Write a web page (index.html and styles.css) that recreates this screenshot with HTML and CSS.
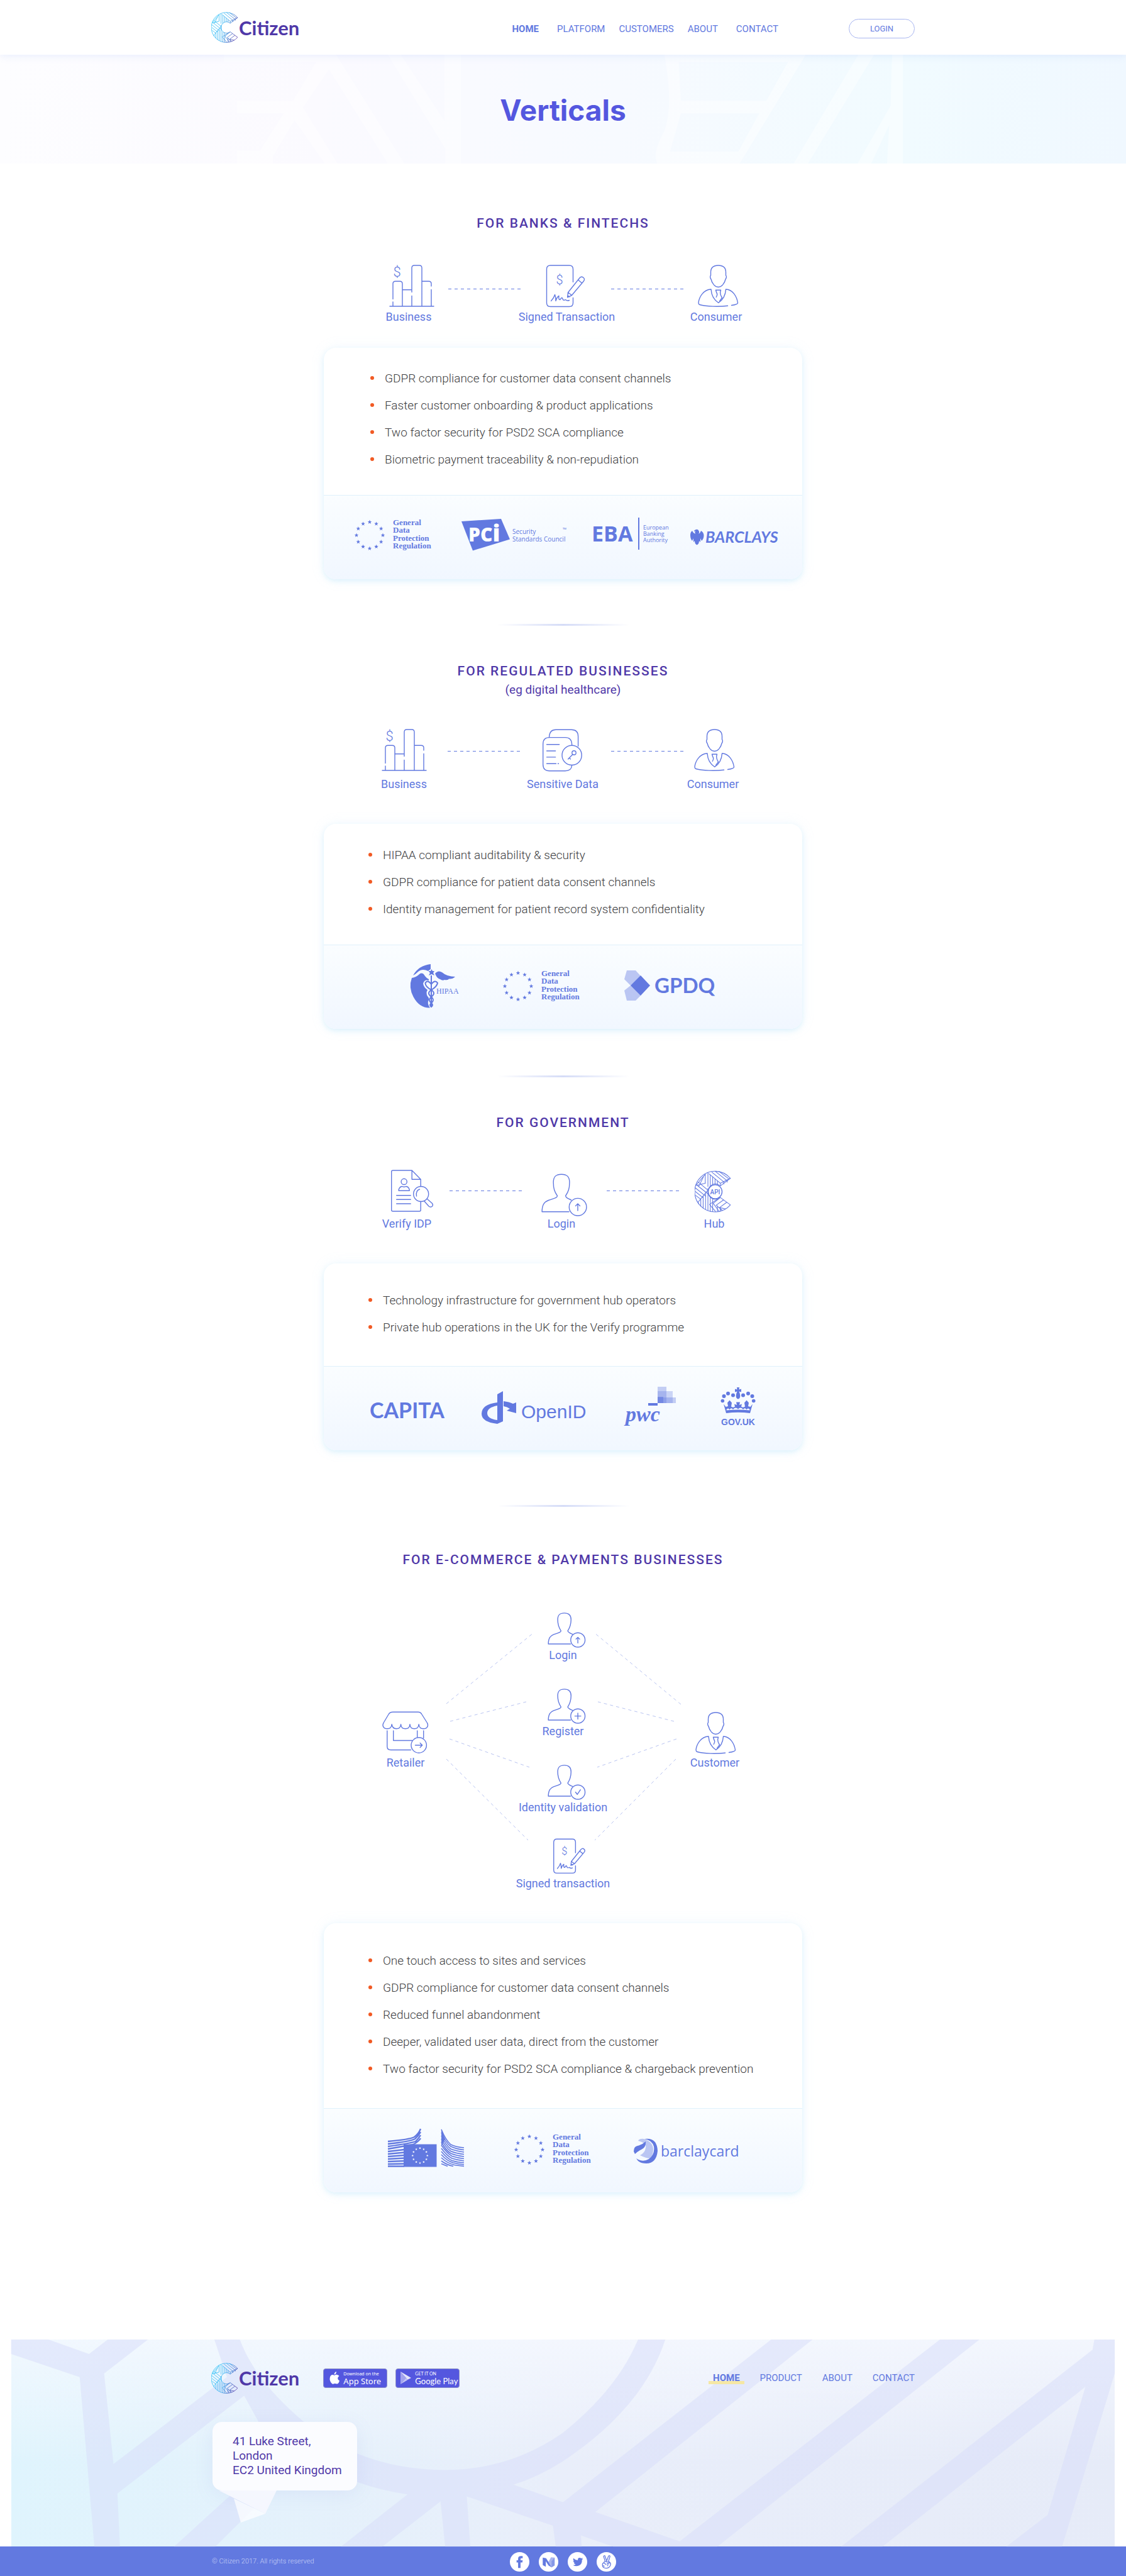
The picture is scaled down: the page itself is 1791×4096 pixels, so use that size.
FILE: index.html
```html
<!DOCTYPE html>
<html lang="en">
<head>
<meta charset="utf-8">
<title>Citizen – Verticals</title>
<meta name="viewport" content="width=device-width, initial-scale=1">
<link rel="stylesheet" href="styles.css">
</head>
<body>
<svg class="sprite" aria-hidden="true">
  <defs>
    <linearGradient id="brand" gradientUnits="userSpaceOnUse" x1="28" y1="100" x2="166" y2="140">
      <stop offset="0" stop-color="#2bc4f8"/><stop offset=".5" stop-color="#35aef0"/><stop offset="1" stop-color="#4f38a8"/>
    </linearGradient>
    <symbol id="c-mark" viewBox="28 48 138 158">
      <g fill="none" stroke-width="2.500" stroke-linejoin="round">
        <path d="M163 77A77 77 0 1 0 163 178L125 150L117 154A27 27 0 0 1 79 127A27 27 0 0 1 117 101L125 106Z"/>
        <path d="M82 60L125 96L163 77M93 54L137 90M106 51L149 85M120 51L157 79M125 96V106M138 90V99M151 84V92"/>
        <path d="M78 57V108M87 64V108M96 71V102M105 79V100M114 87V101M68 62V96M68 62L34 102"/>
        <path d="M61 72L44 106M68 96L34 104M42 92L78 122M35 102L78 136M31 114L70 145M30 127L60 151M32 142L50 156"/>
        <path d="M78 116V198M78 122L42 166M69 132V195M60 143V190M51 154V183M42 166V173M87 149V202M96 153V203"/>
        <path d="M117 154L84 176L107 203M125 150L98 172L120 202M137 159L109 179L133 199M149 168L122 188L145 193M114 181V203M125 188V201"/>
      </g>
    </symbol>
    <symbol id="business" viewBox="0 0 80 72" overflow="visible">
      <path d="M10 69H80M15 62V69M15 57.500V33Q15 29.200 19 29.200H26Q30 29.200 30 33V69M30 42.800H45M45 46.600V8Q45 4 49 4H57Q61 4 61 8V69M45 52.400V69M61 29.200H72Q76 29.200 76 33V37M76 42.400V69"/>
      <text class="glyph" x="21.700" y="21.500" font-size="22">$</text>
    </symbol>
    <symbol id="signed" viewBox="0 0 80 72" overflow="visible">
      <path d="M49.500 30.400V10Q49.500 4 43.500 4H13.500Q7.500 4 7.500 10V63.500Q7.500 69.500 13.500 69.500H43.500Q49.500 69.500 49.500 63.500V55.500"/>
      <path d="M14.600 60.600Q19 56 20.600 50.500Q22 54 22 60.500Q24 54 27 52.500Q26 59 29 58.500Q32 53 33 57.500Q34 60.500 37.500 58.500Q40 61 43.500 59.500"/>
      <path d="M40.600 54.800L41.500 47L59.500 24.500Q62.500 20.500 66 23.500Q69 26 66 29.500L47.500 51.500ZM41.500 47L47.500 51.500M57.500 27L63.500 32M41 52L44 54"/>
      <text class="glyph" x="28.100" y="33.500" font-size="20">$</text>
    </symbol>
    <symbol id="consumer" viewBox="0 0 80 72" overflow="visible">
      <path d="M43.500 4C35.500 4 31.500 8 31.500 15V20C30 21 30.500 24 32 26C33.500 33 38.500 38.500 43.500 38.500C48.500 38.500 53.500 33 55 26C56.500 24 57 21 55.500 20V15C55.500 8 51.500 4 43.500 4Z"/>
      <path d="M58.500 68.300C44 70 25 69.500 14 66.500Q12 66 12 63.500C13 54 20 42.500 32 42C32.500 51 37 59 43.800 63.500C50.500 59 55 51 55.500 42C67 42.500 73 54 74.500 63.500Q74.800 66 64.500 67.500"/>
      <path d="M40.600 47L39.500 43.200H47.500L46.600 47Q46.500 51 49.500 55.500L45.500 61M40.600 47Q43 50 40.200 54.500"/>
    </symbol>
    <symbol id="sensitive" viewBox="0 0 80 72" overflow="visible">
      <path d="M18.600 16.600V15Q19.500 4.200 29 4.200H54Q64.600 4.200 64.600 15V30.500"/>
      <path d="M54.600 28.500V27Q54 16.600 44 16.600H19Q8.700 16.600 8.700 27V59.500Q8.700 69.700 19 69.700H44Q54 69.700 54.600 61"/>
      <circle cx="54.600" cy="44.900" r="15.600"/><circle cx="58" cy="41" r="3.200"/>
      <path d="M56 43.500L48.600 51M50.500 49L52.500 51M14.600 27.800H34.600M14.600 38H28.600M14.600 47.900H28.600M14.600 58.200H29.500M32.500 58.200H33.500"/>
    </symbol>
    <symbol id="verify" viewBox="0 0 80 72" overflow="visible">
      <path d="M62.200 28.500V17.300L48.200 3H18Q15.700 3 15.700 5V66Q15.700 68 18 68H60Q62.200 68 62.200 66V52.400M48.200 3V17.300H62.200"/>
      <circle cx="35.700" cy="20.900" r="4.600"/><path d="M27.200 35.300V33.500Q29 28.500 33 28.500Q35.700 30 38.500 28.500Q42.500 28.500 44.200 33.500V35.300ZM23.700 42.800H46.200M23.700 49.200H46.200M23.700 56H46.200"/>
      <circle cx="62.700" cy="40.500" r="12"/><path d="M55.500 44Q54 35 60.500 33M67.500 51.500L75 60Q78 62.500 80.500 60Q82.500 57.500 80 55L72.500 48.500"/>
    </symbol>
    <symbol id="person" viewBox="0 0 80 72" overflow="visible">
      <path d="M52 68.800H9.100C9.300 57 13 53 19.500 50.500C27 47.500 33 47.500 33.500 43.500C29 37 27.200 32 27.200 22C27.200 13 31 9.300 40 9.300C49 9.300 52.900 13 52.900 22C52.900 32 51 37 46.600 43.500C47 46.500 50 47.500 55.500 50"/>
      <circle cx="66.100" cy="61.200" r="13.800"/>
    </symbol>
    <symbol id="shop" viewBox="0 0 80 72" overflow="visible">
      <path d="M20 3.200H60Q64 3.200 66 7L74.500 20.500C77 25 74.500 29.800 68.600 29.800Q61.800 29.800 61.200 22.700Q60.500 29.800 54 29.800Q47.500 29.800 47 22.700Q46.500 29.800 39.800 29.800Q33 29.800 32.600 22.700Q32 29.800 25.400 29.800Q19 29.800 18.200 22.700Q17.500 29.800 11 29.800C5 29.800 2.500 25 5 20.500L13 7Q15 3.200 20 3.200Z"/>
      <path d="M10.800 33V58Q10.800 63.500 16.500 63.500H48.500M20.700 33V48.500H51M58.700 33V43M68.700 33V44.500"/>
      <circle cx="61.200" cy="56" r="12.200"/><path d="M55.500 56H66.500M63.200 52.500L66.700 56L63.200 59.500"/>
    </symbol>
    <path id="star" d="M0-3.400L.9-1.100L3.300-1.100L1.400.500L2.100 2.900L0 1.500L-2.100 2.900L-1.400.500L-3.300-1.100L-.9-1.100Z"/>
    <g id="stars">
      <use href="#star" x="0" y="-21"/><use href="#star" x="10.500" y="-18.200"/><use href="#star" x="18.200" y="-10.500"/><use href="#star" x="21" y="0"/><use href="#star" x="18.200" y="10.500"/><use href="#star" x="10.500" y="18.200"/><use href="#star" x="0" y="21"/><use href="#star" x="-10.500" y="18.200"/><use href="#star" x="-18.200" y="10.500"/><use href="#star" x="-21" y="0"/><use href="#star" x="-18.200" y="-10.500"/><use href="#star" x="-10.500" y="-18.200"/>
    </g>
  </defs>
</svg>

<header class="site-header">
  <div class="wide bar">
    <a class="logo" href="#"><svg class="logo-mark" viewBox="28 48 138 158" stroke="url(#brand)" aria-hidden="true"><use href="#c-mark" x="28" y="48" width="138" height="158"/></svg><span>Citizen</span></a>
    <nav class="nav main-nav" aria-label="Main">
      <a class="current" href="#">HOME</a><a href="#">PLATFORM</a><a href="#">CUSTOMERS</a><a href="#">ABOUT</a><a class="last" href="#">CONTACT</a>
    </nav>
    <button class="login" type="button">LOGIN</button>
  </div>
</header>

<section class="hero">
  <svg class="hero-art" viewBox="0 0 1791 173" preserveAspectRatio="none" aria-hidden="true">
    <g transform="matrix(1.1424 0 0 .311 0 -12.400)" fill="#fff" fill-opacity=".42">
      <path d="M312 40H468L563 596H540L458 115L422 310L470 596H452L410 375L380 560V596H330V530H362L395 340H330V275H408L440 78H312Z"/>
      <path d="M540 40H558L619 380V40H642V596H620V520Z"/>
      <path fill-rule="evenodd" d="M925 40H1122L1030 596H915Q908 540 925 430Q938 300 925 40ZM945 78L948 275H1067L1097 78ZM948 340L933 535H1028L1057 340Z"/>
      <path d="M1195 40H1217L1125 596H1105ZM1242 40H1257V596H1235L1238 400L1213 596H1194L1240 300Z"/>
    </g>
  </svg>
  <h1>Verticals</h1>
</section>

<main>
  <section class="vertical banks">
    <h2>FOR BANKS &amp; FINTECHS</h2>
    <div class="flow">
      <figure><svg class="icon" viewBox="0 0 80 72"><use href="#business"/></svg><figcaption>Business</figcaption></figure>
      <span class="dash"></span>
      <figure><svg class="icon" viewBox="0 0 80 72"><use href="#signed"/></svg><figcaption>Signed Transaction</figcaption></figure>
      <span class="dash"></span>
      <figure><svg class="icon" viewBox="0 0 80 72"><use href="#consumer"/></svg><figcaption>Consumer</figcaption></figure>
    </div>
    <div class="card">
      <ul>
        <li>GDPR compliance for customer data consent channels</li>
        <li>Faster customer onboarding &amp; product applications</li>
        <li>Two factor security for PSD2 SCA compliance</li>
        <li>Biometric payment traceability &amp; non-repudiation</li>
      </ul>
      <div class="partners">
        <svg width="132" height="74" viewBox="0 2 132 74"><use href="#stars" x="22" y="35"/><g class="gdpr"><text x="59" y="19">General</text><text x="59" y="31">Data</text><text x="59" y="44">Protection</text><text x="59" y="56">Regulation</text></g></svg>
        <svg width="173" height="74" viewBox="0 0 173 74"><path d="M0 11L63 7L77 39.500L18 57.500Z"/><text class="pci" x="11" y="43">PC<tspan font-size="37">i</tspan></text><g class="tiny"><text x="81" y="31">Security</text><text x="81" y="43">Standards Council</text><text x="161" y="27" font-size="8">™</text></g></svg>
        <svg width="119" height="74" viewBox="0 0 119 74"><text class="eba" x="-2" y="43">EBA</text><path d="M72 5H74V56H72Z"/><g class="micro"><text x="80" y="24">European</text><text x="80" y="34">Banking</text><text x="80" y="44">Authority</text></g></svg>
        <svg width="142" height="74" viewBox="0 0 142 74"><path d="M9 24Q12 23 13.500 26Q15 28 13.500 31Q16 29 17 26Q21 28 21.500 33Q21.500 39 18 42L16 38V44L14 42Q14 47 10.500 48.500Q7 47 7 42L5 44V38L3 42Q0 39 0 33Q0 28 3 26Q4 29 8 31Q6.500 28 8.500 26.500L5.500 27Q6.500 24.500 9 24Z"/><text class="barclays" x="24" y="45">BARCLAYS</text></svg>
      </div>
    </div>
  </section>

  <hr>

  <section class="vertical regulated">
    <h2>FOR REGULATED BUSINESSES</h2>
    <p class="sub">(eg digital healthcare)</p>
    <div class="flow">
      <figure><svg class="icon" viewBox="5 0 80 72"><use href="#business" width="80" height="72"/></svg><figcaption>Business</figcaption></figure>
      <span class="dash"></span>
      <figure><svg class="icon" viewBox="0 0 80 72"><use href="#sensitive"/></svg><figcaption>Sensitive Data</figcaption></figure>
      <span class="dash"></span>
      <figure><svg class="icon" viewBox="1 0 80 72"><use href="#consumer" width="80" height="72"/></svg><figcaption>Consumer</figcaption></figure>
    </div>
    <div class="card">
      <ul>
        <li>HIPAA compliant auditability &amp; security</li>
        <li>GDPR compliance for patient data consent channels</li>
        <li>Identity management for patient record system confidentiality</li>
      </ul>
      <div class="partners">
        <svg width="90" height="74" viewBox="0 0 90 74">
          <path d="M32 0V8L28 11Q18 6 11 13Q7 17 4 18Q13 2 32 0Z"/>
          <path d="M2 22Q9 21 14 16Q19 12 23 19Q26 23 29 24V26Q22 24 20 31Q21 37 27 41Q24 46 27 51Q31 55 28 59Q27 64 31 69.500Q14 70 4.500 52Q-3.500 37 2 22Z"/>
          <path d="M33.500 8L35 11H38L36 14L38 18L33.500 16L29 18L31 14L28.500 11H32ZM39 15Q44 9 50 13Q58 20 71 20Q67 24 61 23.500Q60 26 54 25Q51 27 47 24Q42 23 39 15Z"/>
          <g fill="none" stroke="#6279e0" stroke-width="2"><path d="M33 18V69M33 32Q27 24 23.500 30Q23.500 36 33 41Q41 46 33 52Q27 57 33 62Q37 65 33 68M33 32Q39 24 43 30Q42 36 33 41Q25 46 33 52Q39 57 33 62Q29 65 33 68"/></g>
          <text class="hipaa" x="41" y="47">HIPAA</text></svg>
        <svg width="132" height="74" viewBox="0 0 132 74"><use href="#stars" x="22" y="35"/><g class="gdpr"><text x="59" y="19">General</text><text x="59" y="31">Data</text><text x="59" y="44">Protection</text><text x="59" y="56">Regulation</text></g></svg>
        <svg width="147" height="74" viewBox="0 0 147 74"><path opacity=".4" d="M4 10H18L27 20L10 34L0 24ZM10 34L0 42L4 58H18L27 49Z"/><path d="M26 18L41 34L26 50L10 34Z"/><text class="gpdq" x="48" y="46">GPDQ</text></svg>
      </div>
    </div>
  </section>

  <hr>

  <section class="vertical government">
    <h2>FOR GOVERNMENT</h2>
    <div class="flow">
      <figure><svg class="icon" viewBox="0 0 80 72"><use href="#verify"/></svg><figcaption>Verify IDP</figcaption></figure>
      <span class="dash"></span>
      <figure><svg class="icon" viewBox="0 0 80 72"><use href="#person"/><path d="M66 67V56M62.500 59.500L66 56L69.500 59.500"/></svg><figcaption>Login</figcaption></figure>
      <span class="dash"></span>
      <figure><svg class="icon" viewBox="0 0 80 72"><use href="#c-mark" x="9" y="3" width="58" height="67"/><circle class="api" cx="41.500" cy="36.900" r="11"/><text class="glyph bold" x="41.500" y="40.500" font-size="10">API</text></svg><figcaption>Hub</figcaption></figure>
    </div>
    <div class="card">
      <ul>
        <li>Technology infrastructure for government hub operators</li>
        <li>Private hub operations in the UK for the Verify programme</li>
      </ul>
      <div class="partners">
        <svg width="119" height="74" viewBox="0 0 119 74"><text class="capita" x="-1" y="52">CAPITA</text></svg>
        <svg width="170" height="74" viewBox="0 0 170 74"><path d="M25 15V27Q0 30 0 45Q0 58 25 61L34 57V9L25 14ZM25 32V55Q9 53 9 44Q9 35 25 32ZM35 25Q44 26 50 29L55 27V44L40 40L45 37Q41 34 35 33Z"/><text class="openid" x="63" y="52">OpenID</text></svg>
        <svg width="94" height="74" viewBox="0 0 94 74"><path d="M37 28H52V32H37Z"/><path opacity=".35" d="M52 2H66V28H52Z"/><path opacity=".3" d="M52 9H76V28H52Z"/><path opacity=".35" d="M52 19H81V28H52Z"/><path opacity=".6" d="M52 18H61V28H52Z"/><text class="pwc" x="1" y="57">pwc</text></svg>
        <svg width="57" height="74" viewBox="0 0 57 74"><circle cx="5.500" cy="17" r="3"/><circle cx="12" cy="12.700" r="3"/><circle cx="20" cy="15.500" r="3"/><circle cx="36" cy="15.500" r="3"/><circle cx="44" cy="12.700" r="3"/><circle cx="50.500" cy="17" r="3"/><circle cx="3.300" cy="24.500" r="2.800"/><circle cx="52.700" cy="24.500" r="2.800"/><path d="M26 3H30L29.500 6.500L33 5.500V10.500L29.500 9.500Q32 15 31 19Q28 24 25 19Q24 15 26.500 9.500L23 10.500V5.500L26.500 6.500Z"/><path d="M5 29.500L8.500 34L12 33L11 27.500L14.500 23.500L18 27.500L17 33.500Q20.500 36 23 33.500L22 29.500L26 31L25 26.500H31L30 31L34 29.500L33 33.500Q35.500 36 39 33.500L38 27.500L41.500 23.500L45 27.500L44 33L47.500 34L51 29.500L47 44Q28 41.500 9 44Z"/><path fill="#f5faff" d="M9.500 38.500Q12 34.500 14.500 38.500Q17 34.500 20 38Q24 33.500 28 37.500Q32 33.500 36 38Q39 34.500 41.500 38.500Q44 34.500 46.500 38.500V39.500Q28 37.500 9.500 39.500Z"/><text class="govuk" x="28" y="63">GOV.UK</text></svg>
      </div>
    </div>
  </section>

  <hr>

  <section class="vertical ecommerce">
    <h2>FOR E-COMMERCE &amp; PAYMENTS BUSINESSES</h2>
    <div class="diagram">
      <svg class="links" viewBox="515 2562 761 445" aria-hidden="true"><path d="M710 2709L849 2596M716 2737L837 2706M715 2765L842 2810M710 2797L840 2926M1083 2710L945 2596M1072 2737L951 2706M1076 2765L950 2810M1075 2797L946 2926"/></svg>
      <figure class="end"><svg class="icon" viewBox="0 0 80 72"><use href="#shop"/></svg><figcaption>Retailer</figcaption></figure>
      <div class="steps">
        <figure><svg class="icon small" viewBox="-2 6 80 70"><use href="#person" width="80" height="72"/><path d="M66 67V56M62.500 59.500L66 56L69.500 59.500"/></svg><figcaption>Login</figcaption></figure>
        <figure><svg class="icon small" viewBox="-2 6 80 70"><use href="#person" width="80" height="72"/><path d="M66 67V55.500M60.300 61.200H71.800"/></svg><figcaption>Register</figcaption></figure>
        <figure><svg class="icon small" viewBox="-2 6 80 70"><use href="#person" width="80" height="72"/><path d="M61.500 61L65 65.500L71 56.500"/></svg><figcaption>Identity validation</figcaption></figure>
        <figure><svg class="icon small" viewBox="-14 5 80 70"><use href="#signed" width="80" height="72"/></svg><figcaption>Signed transaction</figcaption></figure>
      </div>
      <figure class="end"><svg class="icon" viewBox="2 0 80 72"><use href="#consumer" width="80" height="72"/></svg><figcaption>Customer</figcaption></figure>
    </div>
    <div class="card">
      <ul>
        <li>One touch access to sites and services</li>
        <li>GDPR compliance for customer data consent channels</li>
        <li>Reduced funnel abandonment</li>
        <li>Deeper, validated user data, direct from the customer</li>
        <li>Two factor security for PSD2 SCA compliance &amp; chargeback prevention</li>
      </ul>
      <div class="partners">
        <svg width="147" height="74" viewBox="0 0 147 74">
          <g class="louvre"><path stroke-width="2.400" d="M0 22Q34 19 42 15Q49 10 52 2M0 26Q36 22 43 18Q49 13 52 7M0 30Q36 25 44 22Q49 17 52 12M0 34L40 27Q49 22 52 17M0 38L26 35M0 42L26 39.500M0 46L26 44M0 50L26 48.500M0 54L26 53M0 58L26 57.500M0 61.500H26"/>
          <path stroke-width="1.600" d="M85 3Q92 20 100 27Q108 31 121 32M85 8Q92 24 100 30Q108 34 121 35.500M85 13Q92 28 100 34Q108 37 121 39M85 18Q92 32 100 37.500Q108 41 121 42.500M85 23Q92 36 100 41Q108 44.500 121 46M85 28Q94 41 102 45.500Q110 48 121 49.500M85 33Q94 45 102 49Q110 51.500 121 53M85 38Q94 49 102 52.500Q110 55 121 56M85 43Q94 53 104 56Q112 58 121 59M85 48Q95 57 106 59.500L121 61.500M85 53Q93 59 104 61.500M85 57.500L95 61.500"/></g>
          <path d="M85 2V30L91 18ZM25 26.500H77.500V62.500H25Z"/><g fill="#fff" transform="translate(51 44.500) scale(.56)"><use href="#stars"/></g></svg>
        <svg width="132" height="74" viewBox="0 0 132 74"><use href="#stars" x="22" y="35"/><g class="gdpr"><text x="59" y="19">General</text><text x="59" y="31">Data</text><text x="59" y="44">Protection</text><text x="59" y="56">Regulation</text></g></svg>
        <svg width="170" height="74" viewBox="0 0 170 74"><path d="M17 18Q37 15 38 37Q36 57 20 57Q8 57 4 49Q14 56 24 50Q34 42 32 30Q29 20 17 18Z"/><path opacity=".4" d="M7 21Q9 17 16 18Q30 22 31 34Q31 44 26 49Q20 49 10 44Q18 40 19 32Q21 25 7 21Z"/><path d="M0 38Q0 30 6 29Q14 27 19 22Q20 31 12 35Q6 38 2 42Z"/><text class="bcard" x="43" y="46">barclaycard</text></svg>
      </div>
    </div>
  </section>
</main>

<footer>
  <div class="foot">
    <svg class="foot-art" viewBox="0 0 1756 329" preserveAspectRatio="none" aria-hidden="true">
      <g transform="matrix(.5714 0 0 .311 -18 -24.300)">
        <path d="M31 78H135L248 152L300 78H412L290 252L316 715L632 270L597 78H668Q710 290 850 505Q910 600 1000 665Q1110 745 1240 745Q1420 745 1568 555Q1720 330 1777 78H1853Q1790 430 1568 700Q1500 780 1430 820L1568 910L2148 78H2263L1658 960L1893 1110L2618 78H2728L1998 1137H1708L1618 1080L1620 1137H1548L1540 1030L1300 880L1310 1137H1240L1227 905L1065 1137H950L1135 870Q1060 850 1000 810Q900 740 850 680L600 1137H485L770 660Q720 500 680 365L327 865L334 1137H263L222 270L31 152Z"/>
        <path d="M2343 1137L3043 130L3048 78H3105V250L2958 1137H2803L2918 975L3023 320L2458 1137Z"/>
      </g>
    </svg>
    <div class="wide foot-row">
      <a class="logo" href="#"><svg class="logo-mark" viewBox="28 48 138 158" stroke="url(#brand)" aria-hidden="true"><use href="#c-mark" x="28" y="48" width="138" height="158"/></svg><span>Citizen</span></a>
      <div class="stores">
        <a class="store" href="#"><svg viewBox="0 0 16 20" width="16" height="20" aria-hidden="true"><path fill="#fff" d="M11 0Q11 4 7.500 4.800Q7.500 1.500 11 0ZM8 6Q10 4.700 12 4.900Q14.500 5.200 15.500 7Q13 8.500 13.200 11Q13.500 13.500 16 14.500Q14.500 19.500 12 19.500Q10 18.800 8 19Q6 20 4.500 19.500Q1 17 .5 12Q.5 6 4.500 5Q6 5 8 6Z"/></svg><span><small>Download on the</small>App Store</span></a>
        <a class="store play" href="#"><svg viewBox="0 0 18 20" width="18" height="20" aria-hidden="true"><path fill="#fff" opacity=".45" d="M1 0L10 10L1 20Z"/><path fill="#fff" opacity=".85" d="M1 0L18 10L12 13L10 10Z"/><path fill="#fff" opacity=".65" d="M1 20L10 10L12 13.500Z"/></svg><span><small>GET IT ON</small>Google Play</span></a>
      </div>
      <nav class="nav foot-nav" aria-label="Footer">
        <a class="current" href="#">HOME</a><a href="#">PRODUCT</a><a href="#">ABOUT</a><a href="#">CONTACT</a>
      </nav>
    </div>
    <div class="wide">
      <address>41 Luke Street,<br>London<br>EC2 United Kingdom
        <svg class="tail" viewBox="0 0 92 51" width="92" height="51" aria-hidden="true"><path fill="#fbfcff" opacity=".8" d="M24 13L74 37L35 51Z"/><path fill="#f5f7fe" d="M0 0H92L74 37Z"/></svg>
      </address>
    </div>
  </div>
  <div class="legal">
    <div class="wide legal-row">
      <p>© Citizen 2017. All rights reserved</p>
      <div class="social">
        <a href="#" aria-label="Facebook"><svg viewBox="0 0 32 32"><path d="M13.500 26V17H11V13.500H13.500V11Q13.500 6.500 18 6.500H21V10H19Q17.500 10 17.500 11.500V13.500H21L20.500 17H17.500V26Z"/></svg></a>
        <a href="#" aria-label="Medium"><svg viewBox="0 0 32 32"><path d="M6.500 9L12 10L21 25L16 22L11.500 15V24L6.500 21.500Z"/><path opacity=".55" d="M12 10L16 16L20 8.500L26 9V22L21 25L16 18Z"/><path opacity=".5" d="M21 15L26 9V22L21 25Z"/></svg></a>
        <a href="#" aria-label="Twitter"><svg viewBox="0 0 32 32"><path d="M25.500 11Q24.500 12 23.500 12.500Q24 21 16.500 22.800Q12 23.500 8.500 21.300Q11 21.500 13 20Q10.500 19.500 10 17.500H11.500Q9 16.500 9 14L10.500 14.500Q8 12.500 9.500 10Q12.500 13.300 16.700 13.500Q16 10 19 9.300Q21 9 22.200 10.200L24.500 9.300Q24.200 10.500 23.300 11.200Z"/></svg></a>
        <a href="#" aria-label="AngelList"><svg viewBox="0 0 32 32"><path fill="none" stroke="#6279e0" stroke-width="1.300" d="M14 15L11.500 7.500Q11.500 5.500 13.500 6L16.500 14.500L19.500 6.500Q21.500 5 22 7L19.500 15Q23 17 23 20Q22 26 16 26.500Q9.500 26.500 9.500 21Q9.500 18 12 17.500L16 21M12 17.500Q12 15 15 15.500L21 17Q21 19 17 18.500Q20 20 17.500 23M10.500 22L13 23.500"/></svg></a>
      </div>
    </div>
  </div>
</footer>
</body>
</html>
```
FILE: styles.css
```css
* { box-sizing: border-box; }

:root {
  --blue: #6279e0;
  --purple: #4f38a8;
}

body {
  margin: 0;
  background: #fff;
  color: #3e3e42;
  font-family: Roboto, "Open Sans", sans-serif;
}

h1, h2, p, ul, figure { margin: 0; padding: 0; }
a { color: inherit; text-decoration: none; }
svg { display: block; overflow: visible; }
.sprite { position: absolute; width: 0; height: 0; }

.wide {
  width: 100%;
  max-width: 1119px;
  margin: 0 auto;
}

/* header */
.site-header {
  position: relative;
  z-index: 1;
  background: #fff;
  box-shadow: 0 2px 12px rgba(110, 150, 240, .14);
}
.bar { display: flex; align-items: center; height: 87px; }
.logo {
  display: flex;
  align-items: center;
  gap: 1px;
  color: var(--purple);
  font: 700 31px/48px Lato, sans-serif;
}
.logo-mark { width: 43px; height: 49px; }
.nav { display: flex; color: var(--blue); font-size: 15px; line-height: 20px; }
.nav .current { font-weight: 700; }
.main-nav { gap: 22px; margin-left: auto; padding-top: 4px; }
.main-nav .current { margin-right: 7px; }
.main-nav .last { margin-left: 7px; }
.login {
  width: 105px;
  height: 31px;
  margin: 4px 0 0 112px;
  border: 1px solid #a9b6f0;
  border-radius: 16px;
  background: #fff;
  color: var(--blue);
  font: 13px/20px Roboto, sans-serif;
}

/* hero */
.hero {
  position: relative;
  height: 173px;
  background: linear-gradient(90deg, #fdfdff 0%, #fbfaff 28%, #f7faff 55%, #f1fbff 80%, #f0f8ff 100%);
}
.hero-art { position: absolute; inset: 0; width: 100%; height: 100%; }
h1 {
  position: relative;
  padding-top: 60px;
  color: #5457df;
  font-family: Inter, Roboto, sans-serif;
  font-size: 46px;
  line-height: 56px;
  text-align: center;
}

/* sections */
.vertical { width: 100%; max-width: 761px; margin: 0 auto; }
.banks { padding-top: 80px; }
h2 {
  color: var(--purple);
  font-size: 21px;
  font-weight: 500;
  line-height: 30px;
  letter-spacing: 2px;
  text-align: center;
}
.sub { padding-top: 3px; color: var(--purple); font-size: 19px; line-height: 24px; text-align: center; }
hr {
  width: 210px;
  height: 3px;
  margin: 71px auto 57px;
  border: 0;
  background: linear-gradient(90deg, rgba(196, 207, 244, 0), #d5dcf7, rgba(196, 207, 244, 0));
}
.regulated + hr { margin-top: 74px; }
.government + hr { margin: 87px auto 69px; }

.flow { display: grid; margin: 48px 0 37px; }
.banks .flow { grid-template-columns: 126px 118px 141px 118px 98px; padding-left: 72px; }
.regulated .flow { grid-template-columns: 139px 118px 130px 130px 88px; padding-left: 58px; margin: 47px 0 51px; }
.government .flow { grid-template-columns: 136px 118px 120px 130px 106px; padding-left: 64px; margin: 58px 0 51px; }
figure { display: flex; flex-direction: column; align-items: center; }
figcaption { color: var(--blue); font-size: 18px; line-height: 24px; white-space: nowrap; }
.banks figcaption { padding-top: 2px; }
.regulated figcaption { padding-top: 7px; }
.government figcaption { padding-top: 4px; }
.icon {
  width: 80px;
  height: 72px;
  fill: none;
  stroke: var(--blue);
  stroke-width: 1.4;
  stroke-linecap: round;
  stroke-linejoin: round;
}
.icon.small { width: 66px; height: 58px; stroke-width: 1.7; }
.glyph { fill: var(--blue); stroke: none; text-anchor: middle; font-weight: 300; }
.glyph.bold { font-weight: 500; }
.api { fill: #fff; }
.dash {
  justify-self: end;
  width: 118px;
  height: 1px;
  margin-top: 41px;
  background: repeating-linear-gradient(90deg, var(--blue) 0 5px, transparent 5px 10px);
}
.regulated .dash { margin-top: 38px; }
.government .dash { margin-top: 35px; }

/* relationship diagram */
.diagram {
  position: relative;
  display: grid;
  grid-template-columns: 260px 241px 242px;
  margin: 67px 0 51px;
}
.links {
  position: absolute;
  inset: 0;
  width: 100%;
  height: 100%;
  fill: none;
  stroke: #b9c4f1;
  stroke-width: 1;
  stroke-dasharray: 5 5;
}
.steps { display: grid; gap: 39px; }
.end { padding-top: 157px; }

/* cards */
.card {
  overflow: hidden;
  border-radius: 19px;
  background: #fff;
  box-shadow: 0 3px 8px rgba(120, 205, 245, .22), 0 0 22px rgba(150, 210, 250, .1);
}
.card ul { padding: 28px 24px 35px 94px; list-style: none; }
.banks .card ul { padding: 27px 24px 35px 97px; }
.government .card ul { padding-top: 37px; padding-bottom: 40px; }
.ecommerce .card ul { padding-top: 38px; padding-bottom: 41px; }
.card li {
  position: relative;
  font-size: 19px;
  font-weight: 300;
  line-height: 43px;
}
.card li::before {
  content: "";
  position: absolute;
  top: 18px;
  left: -23px;
  width: 6px;
  height: 6px;
  border-radius: 50%;
  background: #f15a24;
}
.partners {
  display: flex;
  gap: 36px;
  padding: 30px 0 29px 51px;
  border-top: 1px solid #dff1fb;
  background: linear-gradient(180deg, #fafdff, #f1f7ff);
  fill: var(--blue);
}
.partners svg { flex: none; }
.regulated .partners { gap: 59px; padding-left: 138px; }
.government .partners { gap: 58px; padding-left: 74px; }
.ecommerce .partners { gap: 56px; padding-left: 102px; }

.gdpr { font: 700 13px "Liberation Serif", serif; }
.pci { fill: #fbfdff; font: 800 30px "Open Sans", sans-serif; }
.tiny { font: 400 10px "Open Sans", sans-serif; }
.micro { font: 400 9px "Open Sans", sans-serif; }
.eba { font: 700 34px "Open Sans", sans-serif; }
.barclays { font: italic 700 25px Lato, sans-serif; }
.hipaa { font: 12px "Liberation Serif", serif; }
.gpdq { font: 700 33px Lato, sans-serif; }
.capita { font: 700 34px Lato, sans-serif; }
.openid { font: 30px "Liberation Sans", sans-serif; }
.pwc { font: italic 700 34px "Liberation Serif", serif; }
.govuk { font: 700 14px "Liberation Sans", sans-serif; text-anchor: middle; }
.bcard { font: 500 23px "Open Sans", sans-serif; }
.louvre { fill: none; stroke: var(--blue); }

/* footer */
footer { margin-top: 234px; }
.foot {
  position: relative;
  min-height: 329px;
  margin: 0 18px;
  padding-top: 37px;
  background:
    linear-gradient(180deg, rgba(246, 249, 255, .8), rgba(246, 249, 255, 0) 60%),
    linear-gradient(90deg, #dff4fd 0%, #e3f2fc 20%, #e9eefa 50%, #e6ebf8 100%);
}
.foot-art { position: absolute; inset: 0; width: 100%; height: 100%; fill: #d9dff9; fill-opacity: .55; }
.foot-row { position: relative; display: flex; align-items: center; height: 48px; }
.stores { display: flex; gap: 13px; margin-left: 38px; }
.store {
  display: flex;
  align-items: center;
  gap: 6px;
  width: 102px;
  height: 31px;
  padding-left: 9px;
  border: 1px solid #8f92c8;
  border-radius: 4px;
  background: #5457df;
  color: #fff;
  font: 13px/14px "Noto Sans", sans-serif;
  white-space: nowrap;
}
.store small { display: block; font-size: 7px; line-height: 9px; }
.play { padding-left: 6px; font-family: Lato, sans-serif; }
.foot-nav { gap: 32px; margin-left: auto; }
.foot-nav .current {
  background: linear-gradient(#f5e7a5, #f5e7a5) 0 100% / 100% 5px no-repeat;
  margin: 0 -7px;
  padding: 0 7px;
}
address {
  position: relative;
  width: 230px;
  min-height: 109px;
  margin: 46px 0 0 2px;
  padding: 19px 32px;
  border-radius: 15px;
  background: #fbfcff;
  box-shadow: 0 6px 30px rgba(120, 130, 220, .1);
  color: var(--purple);
  font-size: 19px;
  font-style: normal;
  line-height: 23px;
  white-space: nowrap;
}
.tail { position: absolute; top: 100%; left: 10px; }
.legal { background: var(--blue); }
.legal-row { display: grid; grid-template-columns: 1fr auto 1fr; align-items: center; height: 48px; }
.legal p { padding-left: 1px; color: #c6cff5; font-size: 11px; font-weight: 300; line-height: 16px; }
.social { display: flex; gap: 15px; }
.social a { width: 31px; height: 31px; border-radius: 50%; background: #fff; fill: var(--blue); }
```
